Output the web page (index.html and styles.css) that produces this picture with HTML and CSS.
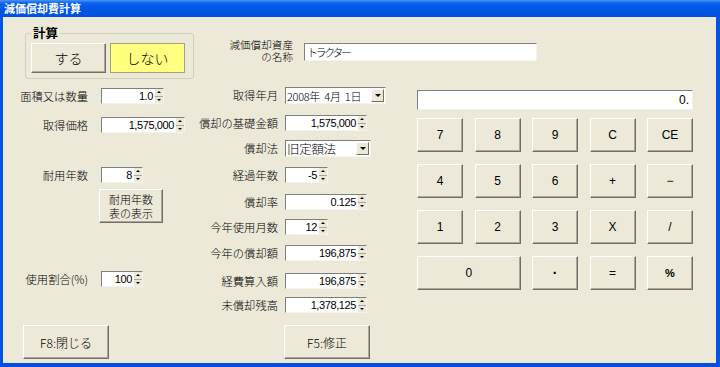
FILE: index.html
```html
<!DOCTYPE html>
<html lang="ja">
<head>
<meta charset="utf-8">
<title>減価償却費計算</title>
<link rel="stylesheet" href="styles.css">
</head>
<body>
<div class="win">
  <div class="titlebar">減価償却費計算</div>
  <div class="frame">
    <div class="top">
      <div class="group">
        <span class="legend">計算</span>
        <button class="btn big">する</button>
        <button class="btn big yellow">しない</button>
      </div>
      <div class="name">
        <div class="name-label"><span class="nl">減価償却資産</span><span class="nl">の名称</span></div>
        <div class="field name-field">トラクター</div>
      </div>
    </div>
    <div class="main">
      <div class="col-left">
        <div class="form form-left">
          <label>面積又は数量</label>
          <div class="field num w63"><span class="v">1.0</span><span class="spin"><i class="u"></i><i class="d"></i></span></div>
          <label>取得価格</label>
          <div class="field num w84"><span class="v">1,575,000</span><span class="spin"><i class="u"></i><i class="d"></i></span></div>
          <label>耐用年数</label>
          <div class="field num w42"><span class="v">8</span><span class="spin"><i class="u"></i><i class="d"></i></span></div>
          <button class="btn table-btn">耐用年数<br>表の表示</button>
          <label>使用割合(%)</label>
          <div class="field num w42"><span class="v">100</span><span class="spin"><i class="u"></i><i class="d"></i></span></div>
        </div>
        <button class="btn foot f8">F8:閉じる</button>
      </div>
      <div class="col-mid">
        <div class="form form-mid">
          <label class="l17">取得年月</label>
          <div class="field combo w101"><span class="ct">2008年&nbsp;&nbsp;4月&nbsp;&nbsp;1日</span><span class="drop"></span></div>
          <label>償却の基礎金額</label>
          <div class="field num w82"><span class="v">1,575,000</span><span class="spin"><i class="u"></i><i class="d"></i></span></div>
          <label class="l17">償却法</label>
          <div class="field combo w86 big-text"><span class="ct">旧定額法</span><span class="drop"></span></div>
          <label>経過年数</label>
          <div class="field num w43"><span class="v">-5</span><span class="spin"><i class="u"></i><i class="d"></i></span></div>
          <label>償却率</label>
          <div class="field num w82"><span class="v">0.125</span><span class="spin"><i class="u"></i><i class="d"></i></span></div>
          <label>今年使用月数</label>
          <div class="field num w43"><span class="v">12</span><span class="spin"><i class="u"></i><i class="d"></i></span></div>
          <label>今年の償却額</label>
          <div class="field num w82"><span class="v">196,875</span><span class="spin"><i class="u"></i><i class="d"></i></span></div>
          <label>経費算入額</label>
          <div class="field num w82"><span class="v">196,875</span><span class="spin"><i class="u"></i><i class="d"></i></span></div>
          <label>未償却残高</label>
          <div class="field num w82"><span class="v">1,378,125</span><span class="spin"><i class="u"></i><i class="d"></i></span></div>
        </div>
        <button class="btn foot f5">F5:修正</button>
      </div>
      <div class="col-calc">
        <div class="field display">0.</div>
        <div class="keys">
          <button class="btn key">7</button>
          <button class="btn key">8</button>
          <button class="btn key">9</button>
          <button class="btn key">C</button>
          <button class="btn key">CE</button>
          <button class="btn key">4</button>
          <button class="btn key">5</button>
          <button class="btn key">6</button>
          <button class="btn key">+</button>
          <button class="btn key">&minus;</button>
          <button class="btn key">1</button>
          <button class="btn key">2</button>
          <button class="btn key">3</button>
          <button class="btn key">X</button>
          <button class="btn key">/</button>
          <button class="btn key zero">0</button>
          <button class="btn key dot">&middot;</button>
          <button class="btn key">=</button>
          <button class="btn key pct">%</button>
        </div>
      </div>
    </div>
  </div>
</div>
</body>
</html>
```
FILE: styles.css
```css
* { box-sizing: border-box; }
html, body { margin: 0; padding: 0; }
body {
  width: 720px;
  height: 367px;
  overflow: hidden;
  background: #ECE9D8;
  color: #000;
  font-family: "Noto Sans CJK JP", "Noto Sans", sans-serif;
  font-size: 11.3px;
  font-weight: 300;
}
.win {
  width: 720px;
  height: 367px;
  display: flex;
  flex-direction: column;
}
.titlebar {
  height: 17px;
  padding-left: 4px;
  color: #fff;
  font-weight: bold;
  font-size: 11px;
  line-height: 17px;
  background: linear-gradient(#4A95F8 0, #0C62EC 3px, #0055E5 9px, #0052DE 100%);
}
.frame {
  flex: 1;
  display: flex;
  flex-direction: column;
  background: #ECE9D8;
  border-left: 3px solid #0055E5;
  border-right: 4px solid #0055E5;
  border-bottom: 4px solid #0050DC;
}

/* top area */
.top {
  height: 69px;
  padding: 16px 0 0 22px;
  display: flex;
  align-items: flex-start;
}
.group {
  position: relative;
  width: 169px;
  height: 46px;
  border: 1px solid #D0D0BF;
  border-radius: 3px;
  padding: 9px 0 0 5px;
  display: flex;
  align-items: flex-start;
  gap: 4px;
}
.legend {
  position: absolute;
  left: 5px;
  top: -8px;
  padding: 0 2px;
  background: #ECE9D8;
  font-weight: bold;
  font-size: 12.5px;
  line-height: 14px;
}
.name {
  display: flex;
  align-items: flex-start;
  margin: 7px 0 0 6px;
}
.name-label {
  width: 93px;
  display: flex;
  flex-direction: column;
  align-items: flex-end;
  gap: 1px;
  font-size: 10.6px;
}
.nl {
  display: block;
  height: 10.5px;
  line-height: 10.5px;
  white-space: nowrap;
}
.nl + .nl { margin-top: 0; }

/* controls */
.btn {
  font-family: inherit;
  font-weight: 300;
  color: #000;
  background: #ECE9D8;
  border: 1px solid;
  border-color: #FFFFFF #716F64 #716F64 #FFFFFF;
  box-shadow: inset -1px -1px 0 #ACA899;
  padding: 0;
  margin: 0;
}
.big {
  width: 75px;
  height: 30px;
  font-size: 14px;
}
.yellow {
  background: #FFFF80;
  border-color: #A3A37A;
  box-shadow: none;
}
.field {
  display: flex;
  align-items: center;
  height: 16px;
  background: #fff;
  border: 1px solid;
  border-color: #7F7F7F #F4F3EE #F4F3EE #7F7F7F;
}
.name-field {
  width: 233px;
  height: 18px;
  margin: 3px 0 0 11px;
  padding-left: 2px;
  font-size: 11px;
  letter-spacing: -2.4px;
}
.num {
  justify-content: flex-end;
  font-family: "Liberation Sans", sans-serif;
  font-weight: normal;
  font-size: 11px;
}
.num .v {
  padding-right: 1px;
  letter-spacing: -0.4px;
}
.spin {
  width: 9px;
  align-self: stretch;
  display: flex;
  flex-direction: column;
  background: #ECE9D8;
  border-left: 1px solid #fff;
}
.spin i {
  flex: 1;
  display: flex;
  align-items: center;
  justify-content: center;
}
.spin i::after {
  content: "";
  border-left: 2px solid transparent;
  border-right: 2px solid transparent;
}
.spin .u::after { border-bottom: 2px solid #000; }
.spin .d::after { border-top: 2px solid #000; }
.spin .d { border-top: 1px solid #ACA899; }

.combo {
  height: 17px;
  justify-content: space-between;
  padding-left: 1px;
  font-size: 11px;
}
.combo .ct { white-space: nowrap; letter-spacing: -0.3px; }
.big-text { font-size: 12.5px; }
.drop {
  width: 13px;
  align-self: stretch;
  margin: 1px;
  background: #ECE9D8;
  border: 1px solid;
  border-color: #FFFFFF #716F64 #716F64 #FFFFFF;
  display: flex;
  align-items: center;
  justify-content: center;
}
.drop::after {
  content: "";
  border-left: 3px solid transparent;
  border-right: 3px solid transparent;
  border-top: 3px solid #000;
}
.w42 { width: 42px; }
.w43 { width: 43px; }
.w63 { width: 63px; }
.w82 { width: 82px; }
.w84 { width: 84px; }
.w86 { width: 86px; }
.w101 { width: 101px; }

/* main columns */
.main {
  flex: 1;
  display: flex;
}
.form {
  display: grid;
  align-items: start;
  justify-items: start;
}
.form label {
  justify-self: end;
  line-height: 16px;
  white-space: nowrap;
}
.form label.l17 { line-height: 17px; }

.col-left {
  width: 187px;
  display: flex;
  flex-direction: column;
  padding-bottom: 4px;
}
.form-left {
  margin-top: 2px;
  grid-template-columns: 85px auto;
  column-gap: 13px;
  grid-template-rows: 29px 50px 22px 82px 16px;
}
.table-btn {
  grid-column: 2;
  width: 64px;
  height: 34px;
  margin-left: -2px;
  font-size: 11px;
  line-height: 14.5px;
}
.foot {
  margin-top: auto;
  width: 86px;
  height: 34px;
  font-size: 12px;
}
.f8 { margin-left: 20px; }
.f5 { margin-left: 94px; }

.col-mid {
  width: 227px;
  display: flex;
  flex-direction: column;
  padding-bottom: 4px;
}
.form-mid {
  margin-top: 1px;
  grid-template-columns: 88px auto;
  column-gap: 7px;
  grid-template-rows: 28px 25px 27px 27px 25px 26px 28px 24px 16px;
}

.col-calc {
  width: 276px;
  padding-top: 4px;
}
.display {
  height: 20px;
  justify-content: flex-end;
  padding-right: 3px;
  font-family: "Liberation Sans", sans-serif;
  font-weight: normal;
  font-size: 12px;
}
.keys {
  margin-top: 8px;
  display: grid;
  grid-template-columns: repeat(5, 46px);
  grid-auto-rows: 34px;
  column-gap: 11.5px;
  row-gap: 12px;
}
.key {
  font-family: "Liberation Sans", sans-serif;
  font-weight: normal;
  font-size: 12px;
}
.zero { grid-column: span 2; }
.dot { font-weight: bold; font-size: 14px; }
.pct { font-weight: bold; font-size: 11px; }
```
